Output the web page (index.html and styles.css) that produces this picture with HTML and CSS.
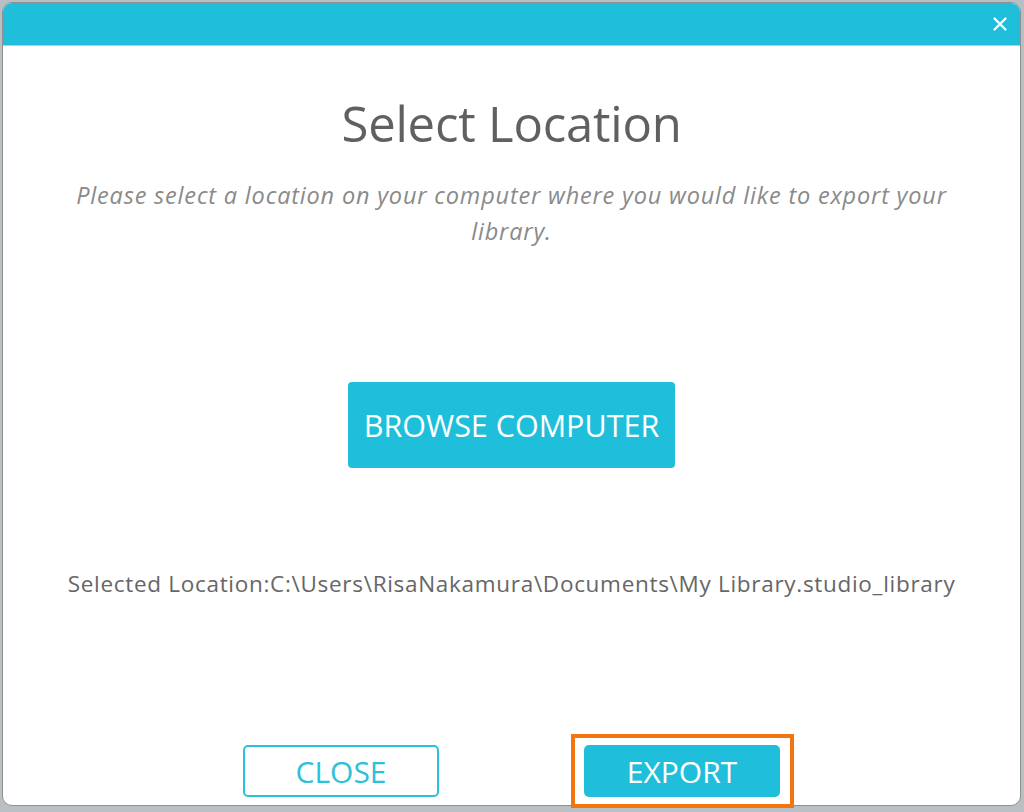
FILE: index.html
```html
<!DOCTYPE html>
<html lang="en">
<head>
<meta charset="utf-8">
<title>Select Location</title>
<link rel="stylesheet" href="styles.css">
</head>
<body>
<div class="dialog">
  <div class="dialog-header">
    <button class="close-x" aria-label="Close">
      <svg width="14" height="14" viewBox="0 0 14 14"><path d="M1.5 1.5 L12.5 12.5 M12.5 1.5 L1.5 12.5" stroke="#ffffff" stroke-width="2.2" stroke-linecap="round"/></svg>
    </button>
  </div>
  <div class="dialog-body">
    <h1 class="title">Select Location</h1>
    <p class="subtitle">Please select a location on your computer where you would like to export your library.</p>
    <div class="browse-row">
      <button class="btn btn-primary btn-browse">BROWSE COMPUTER</button>
    </div>
    <p class="selected">Selected Location:C:\Users\RisaNakamura\Documents\My Library.studio_library</p>
    <div class="footer">
      <button class="btn btn-outline btn-footer">CLOSE</button>
      <button class="btn btn-primary btn-footer btn-highlight">EXPORT</button>
    </div>
  </div>
</div>
</body>
</html>
```
FILE: styles.css
```css
html, body {
  margin: 0;
  padding: 0;
}
body {
  width: 1024px;
  height: 812px;
  background: #b8c0c4;
  padding: 2px 3px 0 2px;
  box-sizing: border-box;
  font-family: "Open Sans", "Noto Sans", sans-serif;
  overflow: hidden;
}
.dialog {
  width: 1019px;
  height: 804px;
  background: #ffffff;
  border: 1px solid #909090;
  border-radius: 10px;
  box-sizing: border-box;
  display: flex;
  flex-direction: column;
}
.dialog-header {
  height: 42px;
  background: #1fbfdb;
  border-bottom: 1px solid #8fdcea;
  border-radius: 9px 9px 0 0;
  display: flex;
  justify-content: flex-end;
  align-items: center;
  padding-right: 12px;
  flex-shrink: 0;
}
.close-x {
  background: none;
  border: 0;
  padding: 0;
  width: 16px;
  height: 16px;
  display: flex;
  align-items: center;
  justify-content: center;
  cursor: pointer;
}
.dialog-body {
  flex: 1;
  display: flex;
  flex-direction: column;
  align-items: center;
}
.title {
  margin: 47px 0 0;
  font-weight: 400;
  font-size: 49px;
  line-height: 60px;
  color: #606060;
  letter-spacing: -0.2px;
}
.subtitle {
  margin: 24px 0 0;
  width: 900px;
  text-align: center;
  font-style: italic;
  font-size: 23.5px;
  line-height: 36px;
  letter-spacing: 0.82px;
  color: #8a8a8a;
}
.browse-row {
  margin-top: 133px;
}
.btn {
  font-family: "Open Sans", "Noto Sans", sans-serif;
  font-weight: 400;
  border-radius: 4px;
  cursor: pointer;
  box-sizing: border-box;
}
.btn-primary {
  background: #1fbfdb;
  color: #ffffff;
  border: 0;
}
.btn-outline {
  background: #ffffff;
  color: #2bc1dc;
  border: 2px solid #2bc1dc;
}
.btn-browse {
  width: 327px;
  height: 86px;
  font-size: 30.5px;
  padding: 0;
}
.selected {
  margin: 101px 0 0;
  font-size: 22.5px;
  line-height: 30px;
  letter-spacing: 0.7px;
  color: #666666;
}
.footer {
  margin-top: auto;
  margin-bottom: 8px;
  display: flex;
  gap: 145px;
}
.btn-footer {
  width: 196px;
  height: 52px;
  font-size: 30px;
  padding: 0;
  border-radius: 5px;
}
.btn-highlight {
  position: relative;
}
.btn-highlight::after {
  content: "";
  position: absolute;
  left: -13px;
  right: -14px;
  top: -11px;
  bottom: -11px;
  border: 4px solid #f37510;
  pointer-events: none;
}
```
